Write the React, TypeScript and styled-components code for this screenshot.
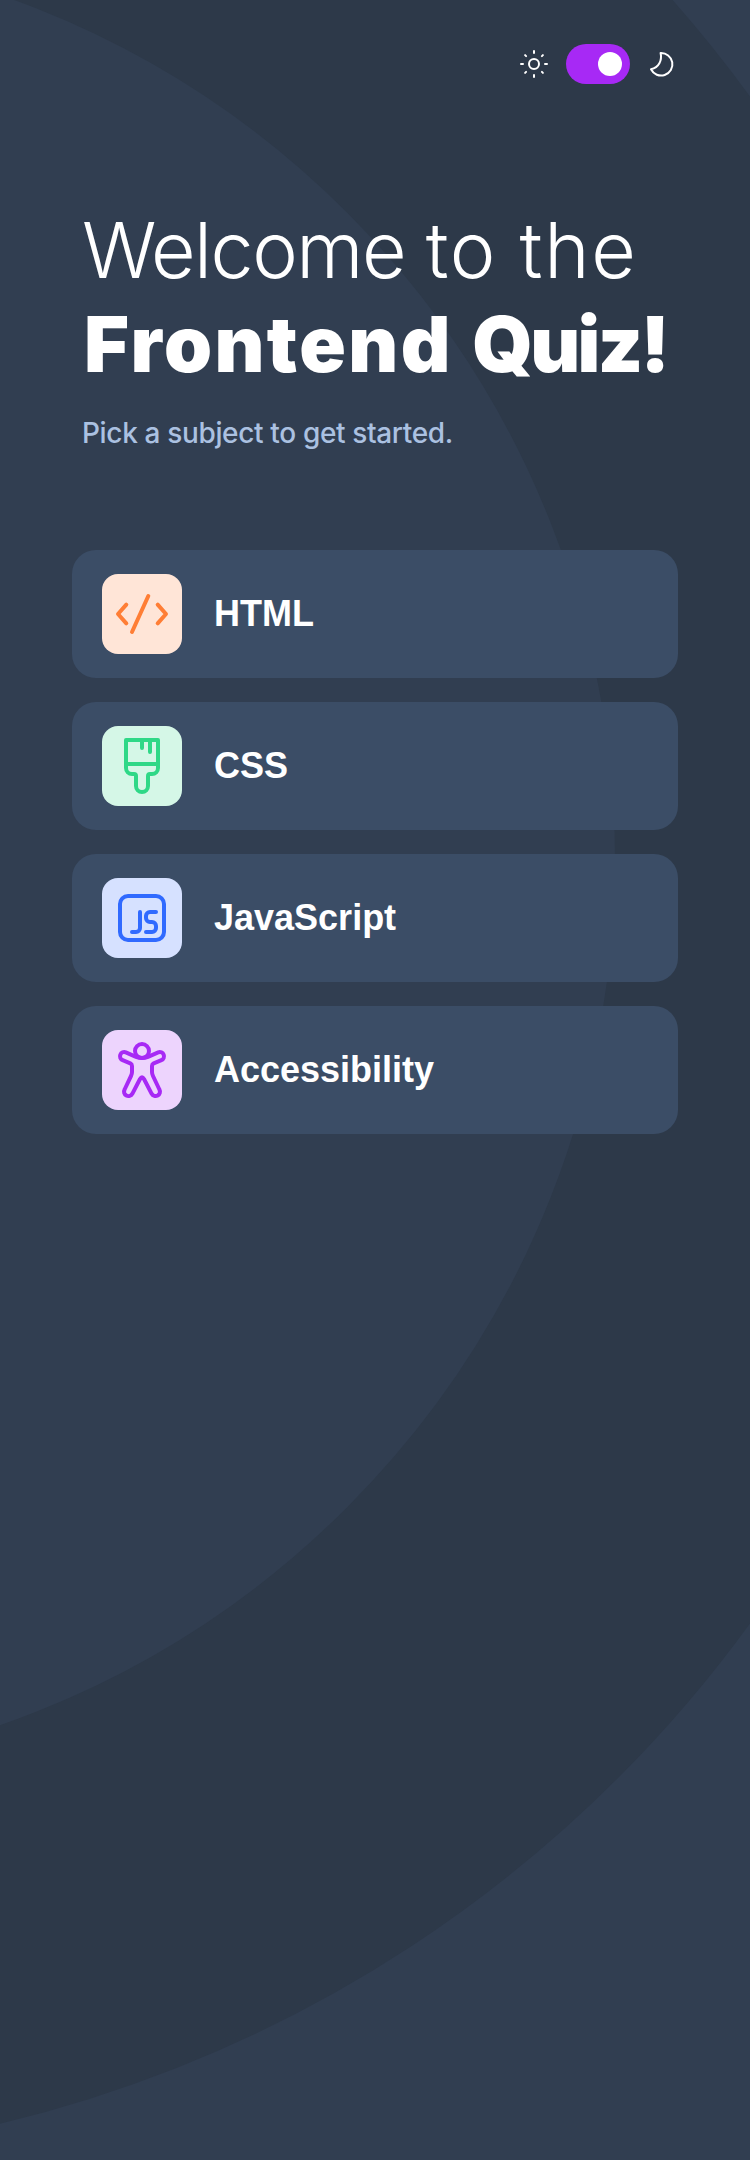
import React from "react";
import styled, { createGlobalStyle } from "styled-components";

const GlobalStyle = createGlobalStyle`
  *, *::before, *::after { box-sizing: border-box; }
  body {
    margin: 0;
    background: #313e51;
    color: #fff;
    font-family: Inter, "Liberation Sans", sans-serif;
  }
`;

const Page = styled.div`
  position: relative;
  min-height: 2160px;
  overflow: hidden;
`;

const Ring = styled.svg`
  position: absolute;
  inset: 0;
  width: 750px;
  height: 2160px;
`;

const Content = styled.div`
  position: relative;
  display: flex;
  flex-direction: column;
  padding: 44px 72px 0;
`;

const ThemeBar = styled.header`
  display: flex;
  justify-content: flex-end;
  align-items: center;
  gap: 16px;
  height: 40px;
`;

const BarIcon = styled.svg`
  width: 32px;
  height: 32px;
  fill: none;
  stroke: #fff;
  stroke-width: 2;
  stroke-linecap: round;
  stroke-linejoin: round;
`;

const Toggle = styled.button<{ $on: boolean }>`
  display: flex;
  align-items: center;
  justify-content: ${({ $on }) => ($on ? "flex-end" : "flex-start")};
  width: 64px;
  height: 40px;
  padding: 0 8px;
  border: 0;
  border-radius: 20px;
  background: #a729f5;
`;

const Knob = styled.span`
  width: 24px;
  height: 24px;
  border-radius: 50%;
  background: #fff;
`;

const Intro = styled.section`
  margin-top: 119px;
  padding-left: 10px;
  white-space: nowrap;
`;

const Title = styled.h1`
  margin: 0;
  font-size: 77px;
  line-height: 94px;
  font-weight: 300;
`;

const TitleLine = styled.span<{ $bold?: boolean }>`
  display: block;
  padding-left: ${({ $bold }) => ($bold ? "2px" : "0")};
  font-weight: ${({ $bold }) => ($bold ? 900 : 300)};
  word-spacing: ${({ $bold }) => ($bold ? "4px" : "-1px")};
`;

const Word = styled.span<{ $tracking: number }>`
  letter-spacing: ${({ $tracking }) => $tracking}px;
`;

const Subtitle = styled.p`
  margin: 25px 0 0;
  color: #abc1e1;
  font-size: 28px;
  font-weight: 450;
  line-height: 34px;
  letter-spacing: -0.35px;
`;

const Subjects = styled.main`
  display: flex;
  flex-direction: column;
  gap: 24px;
  margin-top: 100px;
`;

const SubjectButton = styled.button`
  display: flex;
  align-items: center;
  gap: 32px;
  height: 128px;
  padding: 0 30px;
  border: 0;
  border-radius: 24px;
  background: #3b4d66;
  color: #fff;
  font: 700 36px/41px "Liberation Sans", Arial, sans-serif;
  text-align: left;
`;

const SubjectName = styled.span`
  padding-bottom: 2px;
`;

const IconTile = styled.svg<{ $tint: string; $ink: string }>`
  flex: none;
  width: 80px;
  height: 80px;
  border-radius: 16px;
  background: ${({ $tint }) => $tint};
  fill: none;
  stroke: ${({ $ink }) => $ink};
  stroke-width: 4;
  stroke-linecap: round;
  stroke-linejoin: round;
`;

const subjects = [
  {
    name: "HTML",
    tint: "#ffe5d7",
    ink: "#ff7e35",
    art: <path d="M24.3 30.7 16 40l8.3 9.3M46.3 22 30 58M55.7 30.7 64 40l-8.3 9.3" />,
  },
  {
    name: "CSS",
    tint: "#d5f7e7",
    ink: "#2fd887",
    art: (
      <path d="M24 14h32v28a6 6 0 0 1-6 6h-2a2 2 0 0 0-2 2v10a6 6 0 0 1-12 0V50a2 2 0 0 0-2-2h-2a6 6 0 0 1-6-6zM24 38h32M40 14v8M48 14v12" />
    ),
  },
  {
    name: "JavaScript",
    tint: "#d6e1ff",
    ink: "#306aff",
    art: (
      <>
        <rect x="18" y="18" width="44" height="44" rx="8" />
        <path d="M38 34v16a4 4 0 0 1-4 4h-4M54 34h-6a4 4 0 0 0-4 4v2a4 4 0 0 0 4 4h2a4 4 0 0 1 4 4v2a4 4 0 0 1-4 4h-6" />
      </>
    ),
  },
  {
    name: "Accessibility",
    tint: "#edd4fd",
    ink: "#a729f5",
    art: (
      <>
        <circle cx="40" cy="21" r="7" />
        <path d="M40 28q-3 0-6-1.200L23.800 22.400a4.200 4.200 0 0 0-3.200 7.800L28.300 33.400q1.700.8 1.700 2.600v6q0 2-1 4L22.600 59.500a4.300 4.300 0 0 0 7.700 4.300L38 49q2-3.400 4 0l7.700 14.800a4.300 4.300 0 0 0 7.700-4.300L51 46q-1-2-1-4v-6q0-1.800 1.700-2.600l7.700-3.200a4.200 4.200 0 0 0-3.200-7.800L46 26.800Q43 28 40 28z" />
      </>
    ),
  },
];

export default function App() {
  const [dark, setDark] = React.useState(true);
  return (
    <>
      <GlobalStyle />
      <Page>
        <Ring viewBox="0 0 750 2160" aria-hidden="true">
          <circle cx="-301" cy="860" r="1107.500" fill="none" stroke="#2d3949" strokeWidth="383" />
        </Ring>
        <Content>
          <ThemeBar>
            <BarIcon viewBox="-16 -16 32 32">
              <circle r="5" />
              <path d="M0-13v2M0 11v2M-13 0h2M11 0h2M-8.900-8.900l1 1M7.900 7.900l1 1M-8.900 8.900l1-1M7.900-7.900l1-1" />
            </BarIcon>
            <Toggle $on={dark} aria-label="Dark theme" onClick={() => setDark(!dark)}>
              <Knob />
            </Toggle>
            <BarIcon viewBox="0 0 32 32">
              <path d="M14.600 5C16.200 12.500 13 19.500 5 21.300A11.300 11.300 0 1 0 14.600 5z" />
            </BarIcon>
          </ThemeBar>
          <Intro>
            <Title>
              <TitleLine>
                <Word $tracking={-1.5}>Welcome</Word> <Word $tracking={1.7}>to the</Word>
              </TitleLine>
              <TitleLine $bold>
                <Word $tracking={2.4}>Frontend</Word> <Word $tracking={-2.6}>Quiz!</Word>
              </TitleLine>
            </Title>
            <Subtitle>Pick a subject to get started.</Subtitle>
          </Intro>
          <Subjects>
            {subjects.map(({ name, tint, ink, art }) => (
              <SubjectButton key={name}>
                <IconTile viewBox="0 0 80 80" $tint={tint} $ink={ink}>
                  {art}
                </IconTile>
                <SubjectName>{name}</SubjectName>
              </SubjectButton>
            ))}
          </Subjects>
        </Content>
      </Page>
    </>
  );
}
